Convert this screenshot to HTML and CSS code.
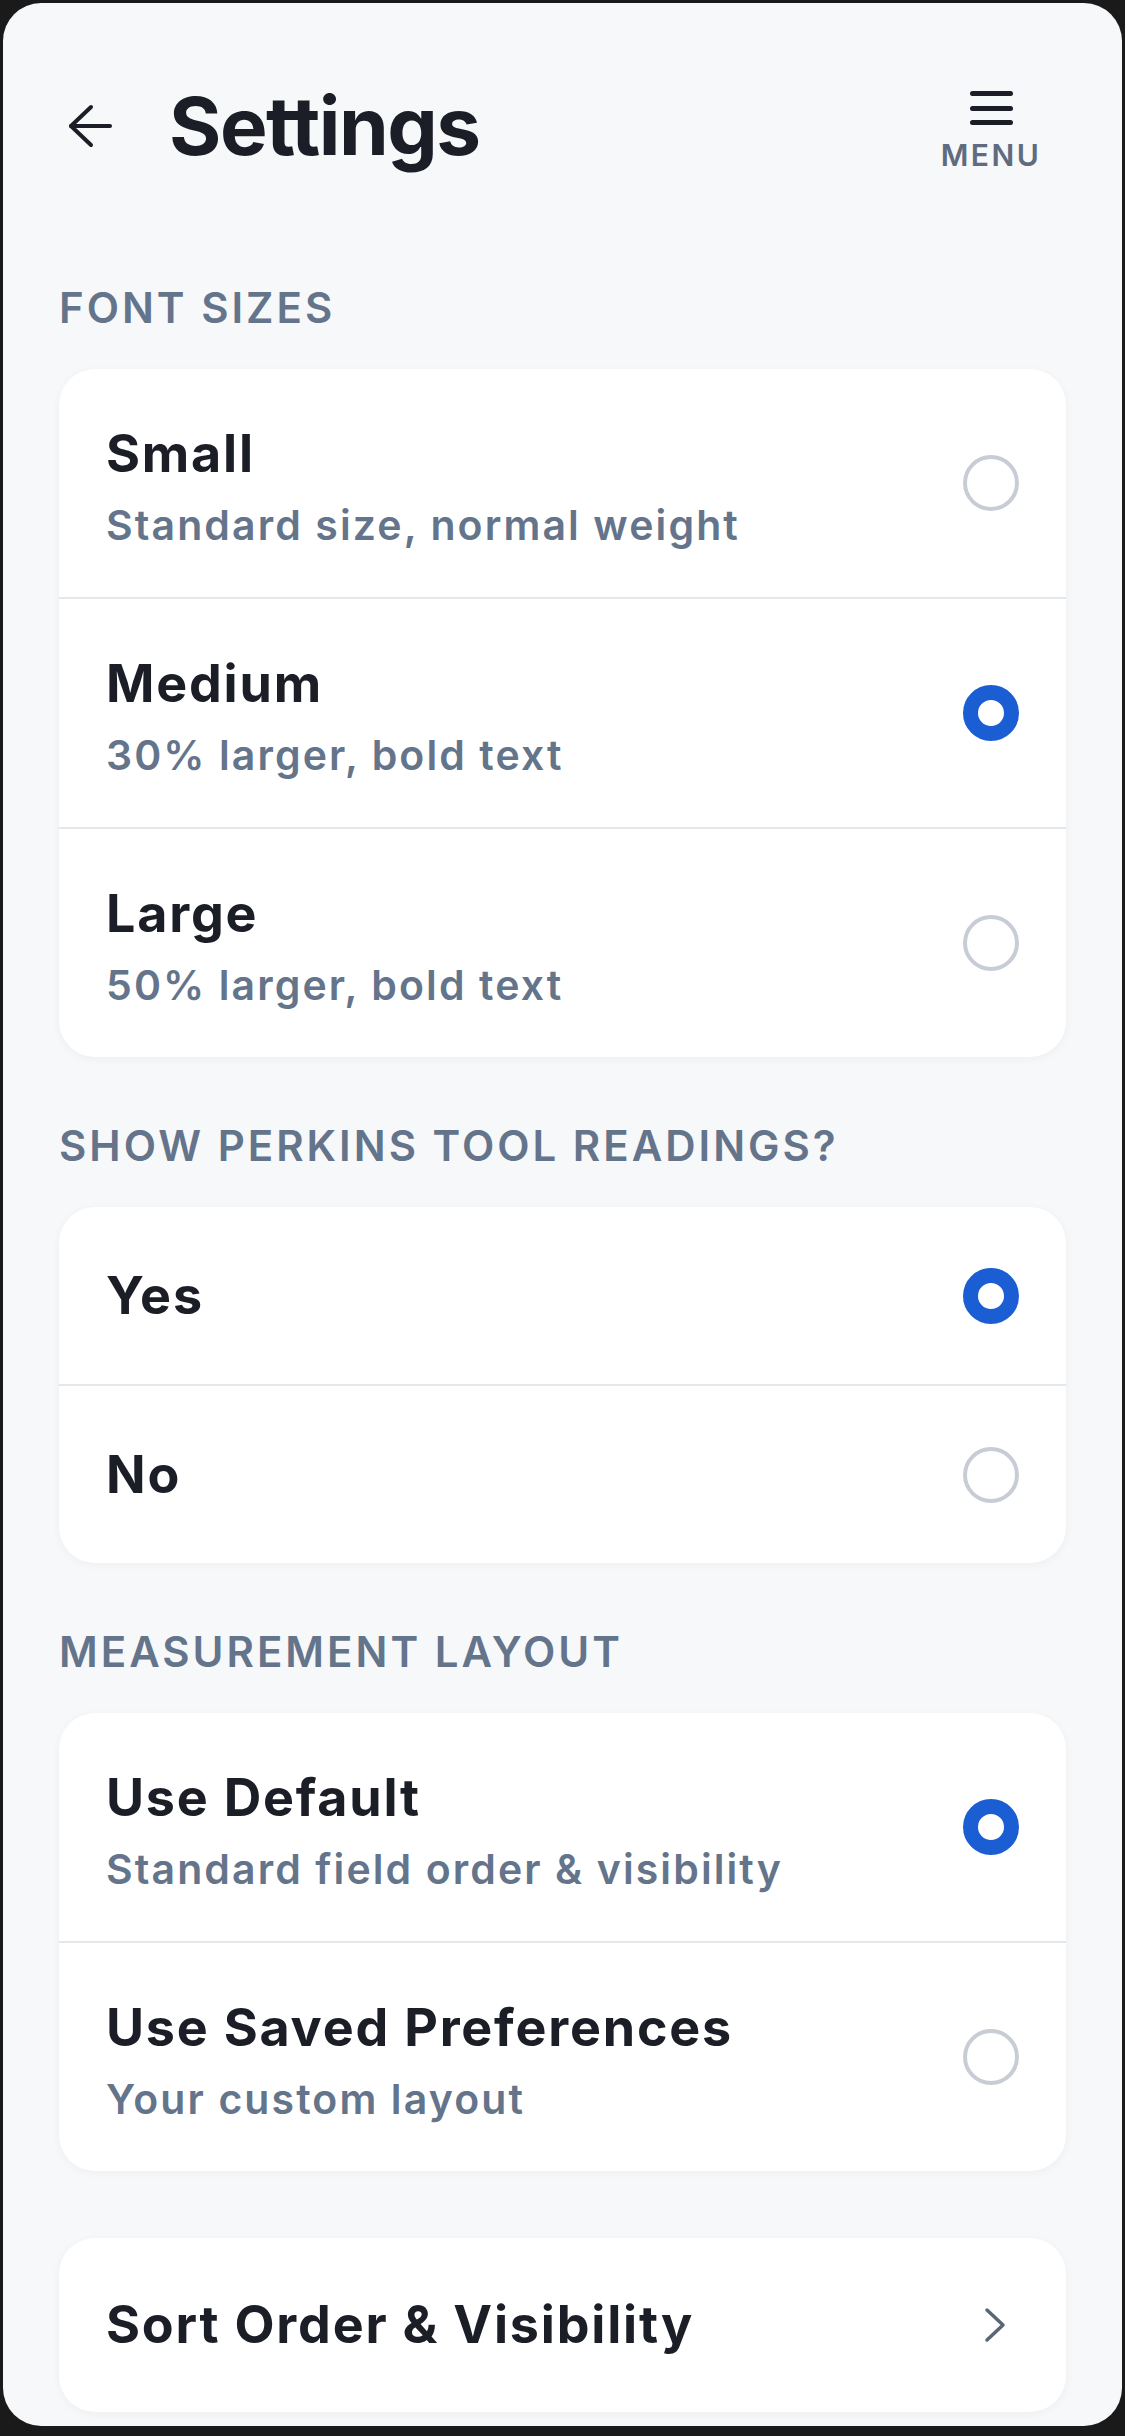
FILE: index.html
```html
<!DOCTYPE html>
<html lang="en">
<head>
    <meta charset="UTF-8">
    <meta name="viewport" content="width=device-width, initial-scale=1.0">
    <title>Settings</title>
    <link rel="stylesheet" href="styles.css">
</head>
<body>
    <div class="screen">
        <header class="top-bar">
            <button class="back-btn" aria-label="Back">
                <svg width="44" height="44" viewBox="0 0 44 44" fill="none" stroke="#1b1e26" stroke-width="4" stroke-linecap="round" stroke-linejoin="round">
                    <path d="M3 22 H42"/>
                    <path d="M23 3 L3 22 L23 41"/>
                </svg>
            </button>
            <h1 class="page-title">Settings</h1>
            <button class="menu-btn">
                <span class="menu-icon"><i></i><i></i><i></i></span>
                <span class="menu-text">MENU</span>
            </button>
        </header>

        <main class="content">
            <section class="group">
                <h2 class="group-label">Font Sizes</h2>
                <div class="card">
                    <label class="option">
                        <span class="option-text">
                            <span class="option-title">Small</span>
                            <span class="option-desc">Standard size, normal weight</span>
                        </span>
                        <input type="radio" name="fontSize" value="small">
                    </label>
                    <label class="option">
                        <span class="option-text">
                            <span class="option-title">Medium</span>
                            <span class="option-desc">30% larger, bold text</span>
                        </span>
                        <input type="radio" name="fontSize" value="medium" checked>
                    </label>
                    <label class="option">
                        <span class="option-text">
                            <span class="option-title">Large</span>
                            <span class="option-desc">50% larger, bold text</span>
                        </span>
                        <input type="radio" name="fontSize" value="large">
                    </label>
                </div>
            </section>

            <section class="group">
                <h2 class="group-label">Show Perkins Tool Readings?</h2>
                <div class="card">
                    <label class="option single">
                        <span class="option-text">
                            <span class="option-title">Yes</span>
                        </span>
                        <input type="radio" name="perkins" value="yes" checked>
                    </label>
                    <label class="option single">
                        <span class="option-text">
                            <span class="option-title">No</span>
                        </span>
                        <input type="radio" name="perkins" value="no">
                    </label>
                </div>
            </section>

            <section class="group">
                <h2 class="group-label">Measurement Layout</h2>
                <div class="card">
                    <label class="option">
                        <span class="option-text">
                            <span class="option-title">Use Default</span>
                            <span class="option-desc">Standard field order &amp; visibility</span>
                        </span>
                        <input type="radio" name="layout" value="default" checked>
                    </label>
                    <label class="option">
                        <span class="option-text">
                            <span class="option-title">Use Saved Preferences</span>
                            <span class="option-desc">Your custom layout</span>
                        </span>
                        <input type="radio" name="layout" value="saved">
                    </label>
                </div>

                <a href="#" class="card link-row">
                    <span class="option-title">Sort Order &amp; Visibility</span>
                    <svg class="chevron" width="26" height="38" viewBox="0 0 26 38" fill="none" stroke="#5b6578" stroke-width="3.5" stroke-linecap="round" stroke-linejoin="round">
                        <path d="M5 4 L21 19 L5 34"/>
                    </svg>
                </a>
            </section>
        </main>
    </div>
</body>
</html>
```

FILE: styles.css
```css
* {
    margin: 0;
    padding: 0;
    box-sizing: border-box;
    font-family: 'Inter', 'Liberation Sans', sans-serif;
}

body {
    background: #1a1a1a;
    width: 1125px;
    height: 2436px;
    overflow: hidden;
}

.screen {
    margin: 3px 3px 0 3px;
    height: 2423px;
    background: #f7f8fa;
    border-radius: 38px;
    overflow: hidden;
}

/* Header */
.top-bar {
    height: 246px;
    padding: 0 56px;
    display: flex;
    align-items: center;
}

.back-btn {
    width: 62px;
    height: 62px;
    display: flex;
    align-items: center;
    justify-content: center;
    background: none;
    border: none;
    margin-right: 48px;
}

.page-title {
    flex: 1;
    font-size: 80px;
    line-height: 96px;
    font-weight: 700;
    color: #1b1e26;
    letter-spacing: -1.5px;
}

.menu-btn {
    width: 150px;
    display: flex;
    flex-direction: column;
    align-items: center;
    background: none;
    border: none;
    margin-top: 12px;
}

.menu-icon {
    display: flex;
    flex-direction: column;
    gap: 9.5px;
    margin-bottom: 12px;
}

.menu-icon i {
    display: block;
    width: 43px;
    height: 5px;
    border-radius: 3px;
    background: #1b1e26;
}

.menu-text {
    font-size: 30px;
    line-height: 36px;
    font-weight: 600;
    color: #5f6b7e;
    letter-spacing: 2.5px;
}

/* Groups */
.content {
    padding: 34px 56px 0;
    display: flex;
    flex-direction: column;
    gap: 64px;
}

.group-label {
    font-size: 42px;
    line-height: 50px;
    font-weight: 600;
    color: #64748b;
    text-transform: uppercase;
    letter-spacing: 3px;
    margin-bottom: 36px;
}

.card {
    background: #fff;
    border-radius: 36px;
    box-shadow: 0 2px 10px rgba(15, 23, 42, 0.045);
    overflow: hidden;
}

.option {
    display: flex;
    align-items: center;
    justify-content: space-between;
    padding: 54px 47px 48px;
    cursor: pointer;
}

.option + .option {
    border-top: 2px solid #e4e7ec;
}

.option.single {
    padding: 58px 47px 57px;
}

.option-text {
    display: flex;
    flex-direction: column;
    gap: 16px;
}

.option-title {
    font-size: 52px;
    line-height: 62px;
    font-weight: 700;
    color: #1b1e26;
    letter-spacing: 1.8px;
}

.option-desc {
    font-size: 41px;
    line-height: 48px;
    font-weight: 600;
    color: #64748b;
    letter-spacing: 2.1px;
}

.option input {
    appearance: none;
    -webkit-appearance: none;
    width: 56px;
    height: 56px;
    border-radius: 50%;
    border: 4px solid #c8cdd5;
    background: #fff;
    flex-shrink: 0;
    margin-bottom: 6px;
}

.option.single input {
    margin-bottom: 0;
}

.option input:checked {
    border: 15px solid #1b5dd3;
}

.link-row {
    margin-top: 67px;
    display: flex;
    align-items: center;
    justify-content: space-between;
    padding: 56px 58px 56px 47px;
    text-decoration: none;
}
```
